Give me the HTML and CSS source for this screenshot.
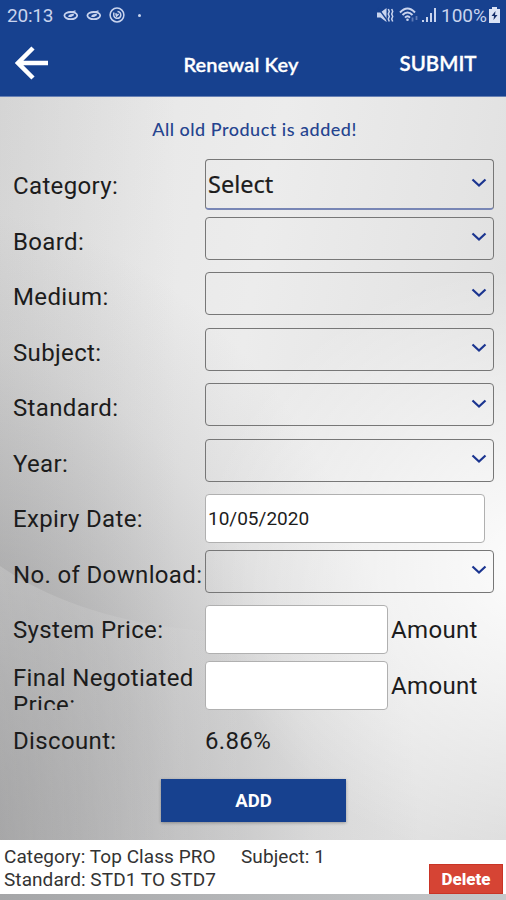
FILE: index.html
```html
<!DOCTYPE html>
<html lang="en">
<head>
<meta charset="UTF-8" />
<meta name="viewport" content="width=device-width, initial-scale=1" />
<title>Renewal Key</title>
<link rel="stylesheet" href="styles.css">
</head>
<body>
  <svg class="defs" width="0" height="0" aria-hidden="true">
    <symbol id="chevron" viewBox="0 0 16 10">
      <path d="M1.5 1.5L8 7.5L14.5 1.5" fill="none" stroke="#1b3590" stroke-width="2.2" />
    </symbol>
    <symbol id="planet" viewBox="0 0 16 12">
      <ellipse cx="7.8" cy="6.6" rx="6.4" ry="3.6" fill="none" stroke="#c9d4ee" stroke-width="1.8" />
      <path d="M5 7.500Q6 4.500 10.500 5Q12 6 9 7.500Q7 8.500 5 7.500Z" fill="#c9d4ee" />
      <path d="M9 3L12.500 1.800" stroke="#c9d4ee" stroke-width="1.300" />
    </symbol>
  </svg>

  <header>
    <div class="status-bar">
      <span class="clock">20:13</span>
      <svg class="planet" width="16" height="12"><use href="#planet" /></svg>
      <svg class="planet" width="16" height="12"><use href="#planet" /></svg>
      <svg class="swirl" width="16" height="16" viewBox="0 0 16 16" fill="none" stroke="#c9d4ee">
        <circle cx="8" cy="8" r="6.900" stroke-width="1.500" />
        <path d="M5 5.500Q3.800 9.500 7 11.200Q11 12 11.800 8.500Q12 5 8.500 4.500" stroke-width="1.500" />
        <path d="M6.800 6.200L7.500 9L9.600 7" stroke-width="1.500" />
      </svg>
      <span class="dot"></span>
      <div class="status-right">
        <svg width="17" height="16" viewBox="0 0 17 16" fill="#c9d4ee">
          <path d="M0 5.500H3.500L9.500 1V15L3.500 10.500H0Z" />
          <path d="M1 1L11 14.500" stroke="#17418f" stroke-width="1.300" />
          <path d="M11.300 2L12.300 4.500L11.300 7L12.300 9.500L11.300 12L12.300 14.500M14.700 2L15.700 4.500L14.700 7L15.700 9.500L14.700 12L15.700 14.500" fill="none" stroke="#c9d4ee" stroke-width="1.500" />
        </svg>
        <svg class="wifi" width="20" height="16" viewBox="0 0 20 16" fill="none" stroke="#c9d4ee" stroke-width="2">
          <path d="M1 5.500Q8.500 -2.500 16 5.500M3.500 8Q8.500 2.800 13.500 8M6 10.600Q8.500 8 11 10.600" />
          <circle cx="8.500" cy="12.700" r="1.300" fill="#c9d4ee" stroke="none" />
          <path d="M13.500 10.500V14.500M17.500 9V13" stroke="#5f7bb6" stroke-width="1.800" />
        </svg>
        <svg class="signal" width="15" height="16" viewBox="0 0 15 16" fill="#c9d4ee">
          <path d="M0 13H2V15H0ZM4 10H6V15H4ZM8 6H10V15H8ZM12 1H14V15H12Z" />
        </svg>
        <span class="percent">100%</span>
        <svg class="battery" width="11" height="16" viewBox="0 0 11 16">
          <path d="M3 0H8V2H11V16H0V2H3Z" fill="#dbe3f5" />
          <path d="M6.500 4L2.500 9H5L4.500 13L8.500 8H6Z" fill="#17306b" />
        </svg>
      </div>
    </div>
    <div class="toolbar">
      <a class="back" href="#" aria-label="Back">
        <svg width="34" height="34" viewBox="0 0 34 34" fill="none" stroke="#fff" stroke-width="4.500">
          <path d="M18 2L3 17L18 32M3 17H33" />
        </svg>
      </a>
      <h1>Renewal Key</h1>
      <a class="submit" href="#">SUBMIT</a>
    </div>
  </header>

  <main>
    <svg class="swoosh" width="506" height="274" viewBox="0 0 506 274" aria-hidden="true">
      <defs>
        <linearGradient id="fade" x1="0" x2="1" y1="0" y2="0">
          <stop offset="0" stop-color="#fff" stop-opacity=".16" />
          <stop offset=".5" stop-color="#fff" stop-opacity="0" />
        </linearGradient>
      </defs>
      <path d="M0 0Q90 62 240 67L506 60V274H0Z" fill="url(#fade)" />
    </svg>

    <p class="message">All old Product is added!</p>

    <form>
      <div class="row"><label>Category:</label><div class="select active"><span>Select</span><svg class="chevron"><use href="#chevron" /></svg></div></div>
      <div class="row"><label>Board:</label><div class="select"><svg class="chevron"><use href="#chevron" /></svg></div></div>
      <div class="row"><label>Medium:</label><div class="select"><svg class="chevron"><use href="#chevron" /></svg></div></div>
      <div class="row"><label>Subject:</label><div class="select"><svg class="chevron"><use href="#chevron" /></svg></div></div>
      <div class="row"><label>Standard:</label><div class="select"><svg class="chevron"><use href="#chevron" /></svg></div></div>
      <div class="row"><label>Year:</label><div class="select"><svg class="chevron"><use href="#chevron" /></svg></div></div>
      <div class="row"><label for="expiry">Expiry Date:</label><input type="text" id="expiry" class="date" value="10/05/2020" /></div>
      <div class="row"><label>No. of Download:</label><div class="select"><svg class="chevron"><use href="#chevron" /></svg></div></div>
      <div class="row"><label for="price">System Price:</label><input type="text" id="price" class="price" /><span class="unit">Amount</span></div>
      <div class="row"><label for="finalPrice" class="two-line">Final Negotiated Price:</label><input type="text" id="finalPrice" class="price" /><span class="unit">Amount</span></div>
      <div class="row"><label>Discount:</label><span class="value">6.86%</span></div>
      <button type="button" class="add">ADD</button>
    </form>
  </main>

  <section class="item">
    <div class="item-text">
      <div class="item-line"><span class="item-category">Category: Top Class PRO</span><span class="item-subject">Subject: 1</span></div>
      <div class="item-line"><span class="item-standard">Standard: STD1 TO STD7</span></div>
    </div>
    <button type="button" class="delete">Delete</button>
  </section>
</body>
</html>
```
FILE: styles.css
```css
* {
  box-sizing: border-box;
}
body {
  margin: 0;
  width: 506px;
  height: 900px;
  overflow: hidden;
  font-family: Roboto, sans-serif;
  color: #1c1c1c;
  background: linear-gradient(to right, #a5a6a8, #c6c8ca);
}
a {
  color: inherit;
  text-decoration: none;
}
.defs {
  position: absolute;
}

/* header */
header {
  height: 97px;
  background: #17418f;
  color: #fff;
  border-bottom: 1px solid #6780b4;
}
.status-bar {
  display: flex;
  align-items: center;
  height: 30px;
  padding: 0 6px 0 7px;
  font-size: 19px;
  color: #c9d4ee;
}
.clock {
  width: 56px;
  letter-spacing: -0.2px;
}
.planet {
  margin-right: 7px;
}
.dot {
  width: 3px;
  height: 3px;
  margin-left: 13px;
  border-radius: 50%;
  background: #c9d4ee;
}
.status-right {
  display: flex;
  align-items: center;
  margin-left: auto;
}
.wifi {
  margin-left: 5px;
}
.signal {
  margin-left: 3px;
}
.percent {
  width: 47px;
  margin-left: 4px;
  white-space: nowrap;
}
.battery {
  margin-left: 1px;
}
.toolbar {
  display: grid;
  grid-template-columns: 60px 1fr 130px;
  align-items: center;
  height: 66px;
  padding: 0 6px 0 15px;
  font-family: Lato, sans-serif;
}
.back {
  height: 34px;
}
h1 {
  margin: 1px 0 0 0;
  padding-left: 37px;
  text-align: center;
  font-size: 20px;
  font-weight: 600;
  letter-spacing: 0.15px;
  -webkit-text-stroke: 0.3px #fff;
}
.submit {
  padding-left: 6px;
  text-align: center;
  font-size: 20.5px;
  font-weight: 600;
  -webkit-text-stroke: 0.3px #fff;
}

/* form */
main {
  position: relative;
  height: 743px;
  background:
    radial-gradient(ellipse 340px 300px at 540px 470px, rgba(255,255,255,.95), rgba(255,255,255,.6) 40%, rgba(255,255,255,0)),
    radial-gradient(ellipse 480px 640px at -60px 750px, rgba(95,95,97,.62), rgba(110,110,112,.38) 45%, rgba(120,120,122,.12) 78%, rgba(120,120,122,0)),
    linear-gradient(to right, rgba(120,120,120,.14), rgba(120,120,120,0) 35%),
    linear-gradient(100deg, #e4e4e4, #ececec 45%, #e4e4e4 75%, #dcdcdc);
}
.swoosh {
  position: absolute;
  left: 0;
  bottom: 0;
}
.message {
  margin: 0;
  padding: 20px 0 0 3px;
  height: 61px;
  text-align: center;
  font-family: Lato, sans-serif;
  font-size: 18px;
  font-weight: 500;
  letter-spacing: 0.5px;
  line-height: 24px;
  color: #25448f;
}
form {
  position: relative;
}
.row {
  display: flex;
  height: 55.55px;
  padding-left: 13px;
}
label {
  width: 192px;
  line-height: 56px;
  font-size: 24px;
  letter-spacing: 0.35px;
  white-space: nowrap;
}
.two-line {
  height: 50px;
  margin-top: 2px;
  padding-top: 5px;
  overflow: hidden;
  line-height: 27.5px;
  white-space: normal;
}
.select {
  display: flex;
  align-items: center;
  width: 289px;
  height: 43px;
  margin-top: 3px;
  padding: 0 6px 0 2px;
  border: 1px solid #777;
  border-radius: 4px;
  font-family: "Noto Sans", sans-serif;
  font-size: 23.5px;
  -webkit-text-stroke: 0.2px #1c1c1c;
}
.select.active {
  height: 51px;
  margin-top: 1px;
  border-bottom: 2px solid #7886b5;
}
.chevron {
  width: 16px;
  height: 10px;
  margin-left: auto;
  margin-bottom: 2px;
}
input {
  height: 49px;
  margin-top: 3px;
  padding: 0 2px;
  border: 1px solid #b0b0b0;
  border-radius: 4px;
  background: #fff;
  font-family: Roboto, sans-serif;
  font-size: 19px;
  color: #1c1c1c;
}
.date {
  width: 280px;
}
.price {
  width: 183px;
}
.unit, .value {
  line-height: 56px;
  font-size: 24px;
  letter-spacing: 0.35px;
}
.unit {
  margin-left: 3px;
}
.add {
  display: block;
  width: 185px;
  height: 43px;
  margin: 10px 0 0 161px;
  padding: 0;
  border: none;
  background: #17418f;
  box-shadow: 0 1px 3px rgba(0,0,0,.3);
  color: #fff;
  font-family: Roboto, sans-serif;
  font-size: 18.5px;
  font-weight: 700;
}

/* added item */
.item {
  display: flex;
  align-items: flex-end;
  justify-content: space-between;
  height: 54px;
  padding-right: 3px;
  background: #fff;
}
.item-text {
  padding: 0 0 3px 4px;
  font-size: 19px;
  letter-spacing: 0.07px;
  line-height: 22.5px;
  color: #333;
}
.item-line {
  display: flex;
}
.item-category {
  width: 237px;
}
.delete {
  width: 74px;
  height: 30px;
  padding: 0;
  border: 1px solid #c93426;
  background: #d64434;
  color: #fff;
  font-family: Roboto, sans-serif;
  font-size: 17px;
  font-weight: 800;
}
```
